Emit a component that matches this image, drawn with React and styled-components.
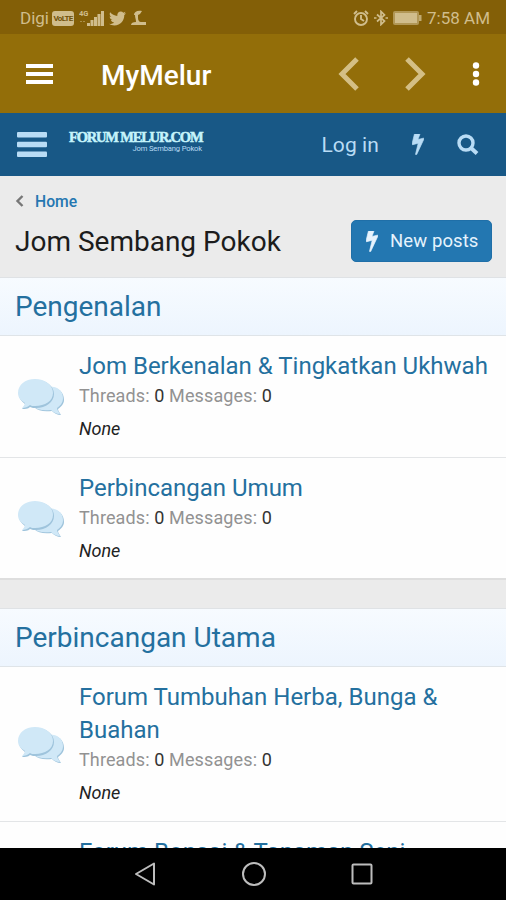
import React from 'react'
import styled, { createGlobalStyle } from 'styled-components';
import { FaTwitter } from 'react-icons/fa';

const GlobalStyle = createGlobalStyle`
  * {
    box-sizing: border-box;
  }
  body {
    margin: 0;
    font-family: Roboto, "Liberation Sans", sans-serif;
    background: #ebebeb;
    overflow: hidden;
  }
`;

const Screen = styled.div`
  display: flex;
  flex-direction: column;
  width: 506px;
  height: 900px;
  overflow: hidden;
  background: #ebebeb;
`;

const StatusBar = styled.div`
  display: flex;
  justify-content: space-between;
  align-items: center;
  flex: none;
  height: 34px;
  padding: 2px 16px 0 20px;
  background: #835f07;
  color: #d0bd8c;
  font-size: 17px;
`;
const StatusGroup = styled.div`
  display: flex;
  align-items: center;
  gap: ${(props) => props.$gap}px;

  svg {
    display: block;
  }
`;
const StatusText = styled.span`
  white-space: nowrap;
`;
const Volte = styled.span`
  width: 22px;
  height: 15px;
  border-radius: 3px;
  background: #d0bd8c;
  color: #6f5108;
  font-size: 8px;
  font-weight: 700;
  line-height: 15px;
  letter-spacing: -0.7px;
  text-align: center;
`;

const AppBar = styled.div`
  display: flex;
  align-items: center;
  flex: none;
  height: 79px;
  padding: 0 26px 0 26px;
  background: #936e09;
  color: #fff;

  svg {
    display: block;
  }
`;
const AppTitle = styled.h1`
  flex: 1;
  margin: 3px 0 0 48px;
  font-size: 28px;
  font-weight: 500;
`;
const AppActions = styled.div`
  display: flex;
  align-items: center;
  gap: 46px;
`;

const SiteHeader = styled.div`
  display: flex;
  align-items: center;
  flex: none;
  height: 63px;
  padding: 0 27px 0 17px;
  background: #185886;
  color: #b9dcf5;

  svg {
    display: block;
  }
`;
const Logo = styled.div`
  width: 134px;
  margin: -5px 0 0 22px;
  text-align: right;
`;
const LogoName = styled.div`
  color: #c5f4fb;
  font-family: "Liberation Serif", serif;
  font-size: 14.5px;
  font-weight: 700;
  line-height: 14px;
  letter-spacing: -1.2px;
  text-align: left;
  white-space: nowrap;
  -webkit-text-stroke: 0.5px #c5f4fb;
`;
const LogoTagline = styled.div`
  margin-right: 1px;
  font-size: 7.6px;
  line-height: 10px;
  letter-spacing: -0.15px;
  white-space: nowrap;
`;
const SiteNav = styled.div`
  display: flex;
  align-items: center;
  margin-left: auto;
`;
const Login = styled.a`
  margin-right: 33px;
  font-size: 21px;
  letter-spacing: 0.1px;
`;
const NavIcon = styled.span`
  margin-right: ${(props) => props.$right || 0}px;
`;

const Content = styled.main`
  flex: 1;
  overflow: hidden;
`;
const PageHead = styled.div`
  height: 101px;
  padding: 15px 14px 0 15px;
`;
const Breadcrumb = styled.div`
  display: flex;
  align-items: center;
  gap: 11px;
  height: 20px;
  color: #2577b1;
  font-size: 15.7px;
  font-weight: 500;
`;
const TitleRow = styled.div`
  display: flex;
  justify-content: space-between;
  align-items: center;
  margin-top: 9px;
  height: 42px;
`;
const PageTitle = styled.h2`
  margin: 1px 0 0;
  color: #1c1c1c;
  font-size: 28px;
  font-weight: 400;
`;
const NewPosts = styled.button`
  display: flex;
  align-items: center;
  gap: 12px;
  width: 141px;
  height: 42px;
  padding: 0 0 0 14px;
  border: 1px solid #1f6fa8;
  border-radius: 5px;
  background: #2377b1;
  color: #e6f3fd;
  font-family: inherit;
  font-size: 18.5px;
  letter-spacing: 0.1px;
  white-space: nowrap;
`;

const Block = styled.section`
  margin-bottom: 28px;
  border-top: 1px solid #dfe2e5;
  border-bottom: 2px solid #dedede;
  background: #fefefe;
`;
const BlockHeader = styled.h3`
  display: flex;
  align-items: center;
  height: 58px;
  margin: 0;
  padding: 0 15px;
  border-bottom: 1px solid #dfe4e8;
  background: linear-gradient(#f7fbff, #edf5fe);
  color: #24709f;
  font-size: 28px;
  font-weight: 400;
`;
const Node = styled.div`
  display: flex;
  padding: 14px 0 0 17px;
  height: ${(props) => props.$height}px;

  & + & {
    border-top: 1px solid #e3e5e7;
  }
`;
const NodeIcon = styled.div`
  display: flex;
  align-items: center;
  width: 62px;
  padding-bottom: 11px;
`;
const NodeTitle = styled.a`
  display: block;
  color: #24709f;
  font-size: 24px;
  line-height: 33px;
  white-space: pre-line;
`;
const NodeMeta = styled.div`
  margin-top: -1px;
  color: #929292;
  font-size: 18px;
  line-height: 27px;
  letter-spacing: 0.12px;

  b {
    color: #333;
    font-weight: 400;
  }
`;
const NodeExtra = styled.div`
  margin-top: 6px;
  color: #222;
  font-size: 18px;
  font-style: italic;
  line-height: 27px;
`;

const NavBar = styled.div`
  display: flex;
  justify-content: center;
  align-items: center;
  flex: none;
  gap: 84px;
  height: 52px;
  padding-right: 1px;
  background: #000;
`;

const Bolt = () => (
  <svg width="12" height="21" viewBox="448 256 896 1536" fill="currentColor" stroke="currentColor" strokeWidth="50">
    <path d="M1333 566q18 20 7 44l-540 1157q-13 25-42 25-4 0-14-2-17-5-25.500-19t-4.500-30l197-808-406 101q-4 1-12 1-18 0-31-11-18-15-13-39l201-825q4-14 16-23t28-9h328q19 0 32 12.500t13 29.500q0 8-5 18l-171 463 396-98q8-2 12-2 19 0 34 15z" />
  </svg>
);

const Bubbles = () => (
  <svg width="48" height="40" viewBox="0 0 48 40">
    <path d="M29 10C40 8 47 13 47 22c0 4-3 7-6 9 0 2 2 4 3 6-4 0-7-2-9-4-8 1-14 0-18-4z" fill="#9fc4dc" />
    <path d="M28 9C39 7 46 12 46 20c0 5-3 8-6 10 0 2 2 4 3 6-4 0-7-2-9-4-8 1-14 0-18-4z" fill="#d0e8f7" />
    <path d="M19 2C29 2 37 8 37 16s-8 14-18 14c-2 0-4 0-6-1-2 2-5 2-8 2 2-2 3-4 3-5C4 23 2 20 2 17 2 8 9 2 19 2z" fill="#9fc4dc" />
    <path d="M18 1C28 1 36 7 36 15s-8 13-18 13c-2 0-4 0-5-1-2 2-5 3-8 3 2-2 3-4 3-5C3 22 1 19 1 15 1 7 8 1 18 1z" fill="#d0e8f7" />
  </svg>
);

const blocks = [
  {
    title: 'Pengenalan',
    nodes: [
      { title: 'Jom Berkenalan & Tingkatkan Ukhwah', height: 121 },
      { title: 'Perbincangan Umum', height: 121 },
    ],
  },
  {
    title: 'Perbincangan Utama',
    nodes: [
      { title: 'Forum Tumbuhan Herba, Bunga &\nBuahan', height: 154 },
      { title: 'Forum Bonsai & Tanaman Seni', height: 121 },
    ],
  },
];

const App = () => {
  return (
    <React.Fragment>
      <GlobalStyle />
      <Screen>
        <StatusBar>
          <StatusGroup $gap={5}>
            <StatusGroup $gap={3}>
              <StatusText>Digi</StatusText>
              <Volte>VoLTE</Volte>
            </StatusGroup>
            <svg width="25" height="17" viewBox="0 0 25 17" fill="currentColor">
              <text x="0" y="6" fontSize="7.500" fontWeight="700">4G</text>
              <path d="M8 13h3v3H8zM11.500 10h3v6h-3zM15 7h3v9h-3zM18.500 4h3v12h-3zM22 1h3v15h-3z" />
              <path d="M1 11h2v1H1zM4 11h2v1H4z" opacity=".5" />
            </svg>
            <FaTwitter size={17} />
            <svg width="16" height="16" viewBox="0 0 16 16" fill="currentColor">
              <path d="M3 5c0-3 3-5 8-4L9 4 7 5v3c0 2 1 4 3 4h5v3H0c0-2 2-3 5-3 0-3-1-4-1-7z" />
            </svg>
          </StatusGroup>
          <StatusGroup $gap={5}>
            <svg width="16" height="16" viewBox="0 0 16 16" fill="none" stroke="currentColor" strokeWidth="1.900">
              <circle cx="8" cy="9" r="6" />
              <path d="M8 5v4l3 2M1 4l3-3M15 4l-3-3" />
            </svg>
            <svg width="14" height="16" viewBox="0 0 14 16" fill="none" stroke="currentColor" strokeWidth="1.700">
              <path d="M3 4.500l7.500 6.500L7 14.500v-13L10.500 5 3 11.500" />
              <path d="M0 8h2.500M11.500 8H14" />
            </svg>
            <svg width="29" height="14" viewBox="0 0 29 14" fill="currentColor">
              <rect x="0" y="0" width="26" height="14" rx="2" opacity=".6" />
              <rect x="2" y="2" width="22" height="10" />
              <rect x="26" y="4" width="2.500" height="6" opacity=".8" />
            </svg>
            <StatusText>7:58 AM</StatusText>
          </StatusGroup>
        </StatusBar>

        <AppBar>
          <svg width="27" height="20" viewBox="0 0 27 20" fill="#fff">
            <path d="M0 0h27v4H0zM0 8h27v4H0zM0 16h27v4H0z" />
          </svg>
          <AppTitle>MyMelur</AppTitle>
          <AppActions>
            <svg width="21" height="34" viewBox="0 0 21 34" fill="none" stroke="#d4bf85" strokeWidth="5">
              <path d="M19 2L4 17l15 15" />
            </svg>
            <svg width="21" height="34" viewBox="0 0 21 34" fill="none" stroke="#d4bf85" strokeWidth="5">
              <path d="M2 2l15 15L2 32" />
            </svg>
            <svg width="8" height="24" viewBox="0 0 8 24" fill="#fff">
              <circle cx="4" cy="3.500" r="3.200" />
              <circle cx="4" cy="12" r="3.200" />
              <circle cx="4" cy="20.500" r="3.200" />
            </svg>
          </AppActions>
        </AppBar>

        <SiteHeader>
          <svg width="30" height="25" viewBox="0 0 30 25" fill="currentColor">
            <rect y="0" width="30" height="5.500" rx="1" />
            <rect y="9.750" width="30" height="5.500" rx="1" />
            <rect y="19.500" width="30" height="5.500" rx="1" />
          </svg>
          <Logo>
            <LogoName>FORUM MELUR.COM</LogoName>
            <LogoTagline>Jom Sembang Pokok</LogoTagline>
          </Logo>
          <SiteNav>
            <Login>Log in</Login>
            <NavIcon $right={33}><Bolt /></NavIcon>
            <NavIcon>
              <svg width="22" height="21" viewBox="0 0 22 21" fill="none" stroke="currentColor">
                <circle cx="9" cy="9" r="7" strokeWidth="3.400" />
                <path d="M14 14l6 5.500" strokeWidth="4" />
              </svg>
            </NavIcon>
          </SiteNav>
        </SiteHeader>

        <Content>
          <PageHead>
            <Breadcrumb>
              <svg width="9" height="12" viewBox="0 0 9 12" fill="none" stroke="#777" strokeWidth="2.400">
                <path d="M7.500 1L2.500 6l5 5" />
              </svg>
              Home
            </Breadcrumb>
            <TitleRow>
              <PageTitle>Jom Sembang Pokok</PageTitle>
              <NewPosts><Bolt />New posts</NewPosts>
            </TitleRow>
          </PageHead>
          {blocks.map((block) => (
            <Block key={block.title}>
              <BlockHeader>{block.title}</BlockHeader>
              {block.nodes.map((node) => (
                <Node key={node.title} $height={node.height}>
                  <NodeIcon><Bubbles /></NodeIcon>
                  <div>
                    <NodeTitle>{node.title}</NodeTitle>
                    <NodeMeta>Threads: <b>0</b> Messages: <b>0</b></NodeMeta>
                    <NodeExtra>None</NodeExtra>
                  </div>
                </Node>
              ))}
            </Block>
          ))}
        </Content>

        <NavBar>
          <svg width="24" height="26" viewBox="0 0 24 26" fill="none" stroke="#bdbdbd" strokeWidth="2">
            <path d="M21 2.500v21L3 13z" strokeLinejoin="round" />
          </svg>
          <svg width="26" height="26" viewBox="0 0 26 26" fill="none" stroke="#bdbdbd" strokeWidth="2">
            <circle cx="13" cy="13" r="11" />
          </svg>
          <svg width="22" height="22" viewBox="0 0 22 22" fill="none" stroke="#bdbdbd" strokeWidth="2">
            <rect x="1.500" y="1.500" width="19" height="19" rx="1" />
          </svg>
        </NavBar>
      </Screen>
    </React.Fragment>
  )
}

export default App;
